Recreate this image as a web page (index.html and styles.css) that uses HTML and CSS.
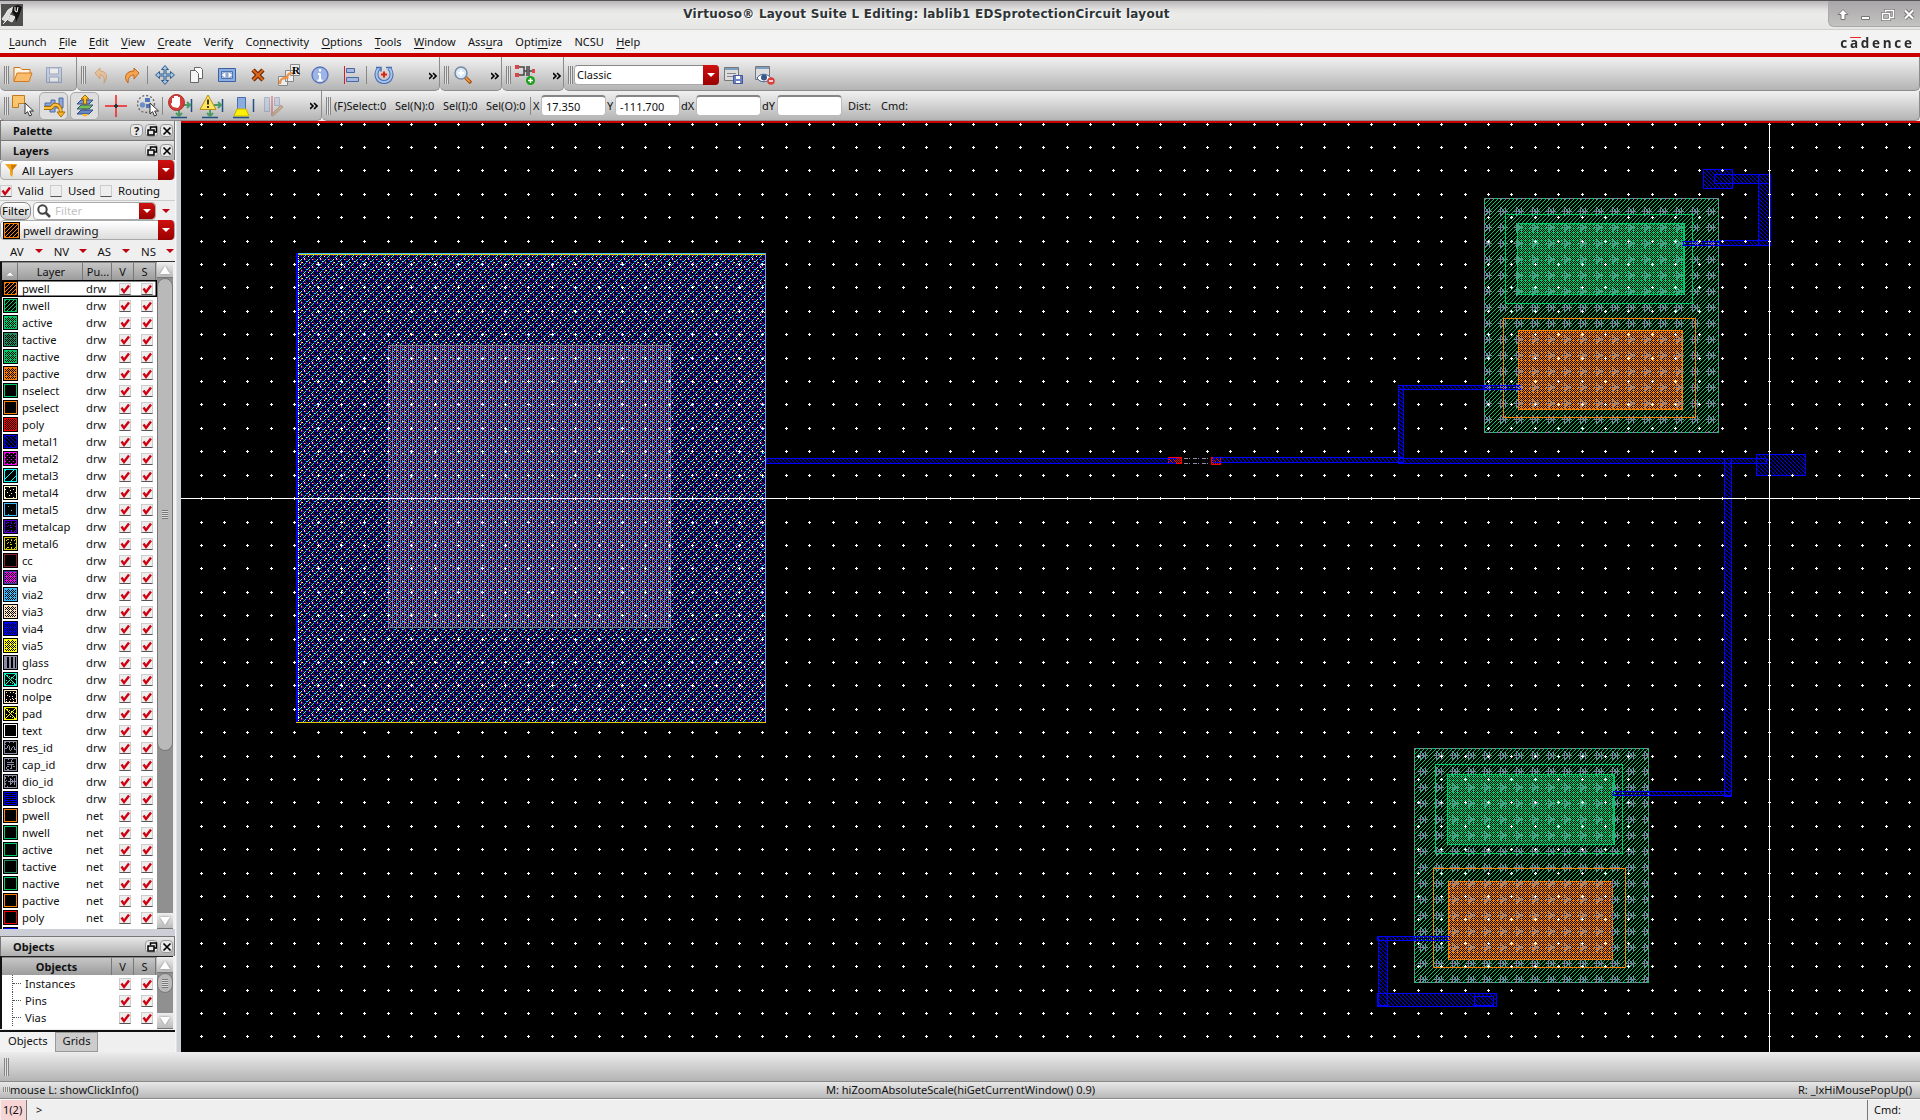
FILE: index.html
```html
<!DOCTYPE html>
<html lang="en">
<head>
<meta charset="utf-8">
<title>Virtuoso Layout Suite L Editing</title>
<link rel="stylesheet" href="styles.css">
</head>
<body>
<svg width="0" height="0" class="defs">
  <symbol id="tick" viewBox="0 0 12 12"><path d="M2.5 5.5 5 9 10 2.5" fill="none" stroke="#cf0010" stroke-width="2.4"/></symbol>
  <symbol id="more" viewBox="0 0 8 8"><path d="M0 1l3 3-3 3M4 1l3 3-3 3" fill="none" stroke="#000" stroke-width="1.6"/></symbol>
  <symbol id="float" viewBox="0 0 10 10"><path d="M3.5 3V1h6v5H7.500M1 4h6v5H1z" fill="none" stroke="#000" stroke-width="1.5"/></symbol>
  <symbol id="close" viewBox="0 0 10 10"><path d="M1.500 1.500l7 7m0-7l-7 7" fill="none" stroke="#000" stroke-width="1.7"/></symbol>
  <symbol id="pointer" viewBox="0 0 10 15"><path d="M1 1v11l2.600-2.300L5.500 14l2.200-1-2-4H9.500z" fill="#fff" stroke="#333"/></symbol>
</svg>
<div class="window">
  <header class="titlebar">
    <svg class="app-icon" width="22" height="22" viewBox="0 0 22 22"><rect width="22" height="22" fill="#50514f"/><path d="M2 20l5-5 2-6 5-4-2-2-5 3-3 5-3 4 3 2M7 16l4 2 3-5-5-2" fill="#ddd" stroke="#eee"/><path d="M12 3l5-2 4 2-3 9-3 6-1-6-3-4z" fill="#111"/><path d="M14 3v4l2 1 1-5" fill="none" stroke="#fff"/></svg>
    <h1>Virtuoso® Layout Suite L Editing: lablib1 EDSprotectionCircuit layout</h1>
    <div class="wm">
      <svg width="92" height="26" viewBox="0 0 92 26"><g fill="#fff" stroke="#777"><path d="M14 9.500l5 5h-3v5h-4v-5h-3z"/><path d="M32.500 16.500h8v3h-8z"/></g><g fill="none"><path d="M56.500 12V10.500h8v7H61M53.500 13.500h7v6h-7z" stroke="#777" stroke-width="3"/><path d="M56.500 12V10.500h8v7H61M53.500 13.500h7v6h-7z" stroke="#fff" stroke-width="1.500"/><path d="M76 10.500l8 8m0-8l-8 8" stroke="#777" stroke-width="4"/><path d="M76 10.500l8 8m0-8l-8 8" stroke="#fff" stroke-width="2"/></g></svg>
    </div>
  </header>
  <nav class="menubar">
    <span><u>L</u>aunch</span><span><u>F</u>ile</span><span><u>E</u>dit</span><span><u>V</u>iew</span><span><u>C</u>reate</span><span>Verif<u>y</u></span><span>Co<u>n</u>nectivity</span><span><u>O</u>ptions</span><span><u>T</u>ools</span><span><u>W</u>indow</span><span>Ass<u>u</u>ra</span><span>Opti<u>m</u>ize</span><span>NCSU</span><span><u>H</u>elp</span>
    <b class="brand">c<i>a</i>dence</b>
  </nav>

  <div class="toolrow row1">
    <section class="tb g-file"><i class="grip"></i>
      <button><svg width="22" height="22" viewBox="0 0 22 22"><path d="M2 17V3.500h6l2 2h8V9" fill="#fff3df" stroke="#c9761c"/><path d="M2 17.500L5 9h15l-3 8.500z" fill="#f8bc6c" stroke="#d07a20"/></svg></button>
      <button class="dim"><svg width="20" height="20" viewBox="0 0 20 20"><path d="M2.500 2.500h15v15h-15z" fill="#b5c3de" stroke="#5570a5"/><path d="M5.500 3h9v6h-9zM5.500 12h9v5h-9z" fill="#fff" stroke="#6a83b0"/></svg></button>
    </section>
    <section class="tb g-edit"><i class="grip"></i>
      <button class="dim"><svg width="20" height="20" viewBox="0 0 20 20"><path d="M4 8l5-5v3c6 0 9 5 4 12 1-6-1-8-4-8v4z" fill="#f3ad62" stroke="#d07420"/></svg></button>
      <button><svg width="20" height="20" viewBox="0 0 20 20"><path d="M17 8l-5-5v3C4 6 1 12 6 18c0-5 2-8 6-8v4z" fill="#f3a451" stroke="#c76514"/></svg></button>
      <i class="sep"></i>
      <button><svg width="22" height="22" viewBox="0 0 22 22"><path d="M11 1.500l3.500 4h-2.500v4.500h4.500V7.500l4 3.500-4 3.500V12H12v4.500h2.500l-3.500 4-3.500-4H10V12H5.500v2.500L1.500 11l4-3.500V10H10V5.500H7.500z" fill="#a9c2de" stroke="#2e5e8e"/></svg></button>
      <button><svg width="20" height="20" viewBox="0 0 20 20"><path d="M8.500 2.500h6l2 2v9h-8z" fill="#fff" stroke="#666"/><path d="M4.500 5.500h5l3 3v9h-8z" fill="#f4f4f4" stroke="#666"/></svg></button>
      <button><svg width="20" height="20" viewBox="0 0 20 20"><path d="M1.500 3.500h17v13h-17z" fill="#8caedd" stroke="#3b62a6"/><path d="M4.500 6.500h11v7h-11z" fill="#bdd3ef" stroke="#4872b5"/><path d="M9 6v8l-5-4zM11 6v8l5-4z" fill="#fff" stroke="#3f66a6" stroke-width=".7"/></svg></button>
      <button><svg width="20" height="20" viewBox="0 0 20 20"><path d="M5 5l10 10M15 5L5 15" stroke="#6f2500" stroke-width="4.500"/><path d="M5 5l10 10M15 5L5 15" stroke="#dd6a1c" stroke-width="2"/></svg></button>
      <button><svg width="26" height="26" viewBox="0 0 26 26"><path d="M14.500 2.500h9v11h-9zM9.500 8.500h8v11h-8zM2.500 14.500h9v9h-9z" fill="#eee" stroke="#888"/><path d="M4 22c0-5 2-6 6-6M11 17c0-5 2-6 6-6" fill="none" stroke="#ef9447" stroke-width="2.500"/><text x="16" y="12" class="r-glyph">R</text></svg></button>
      <button><svg width="20" height="20" viewBox="0 0 20 20"><circle cx="10" cy="10" r="8" fill="#9db4e6" stroke="#5873b8" stroke-width="1.300"/><path d="M10 4v2.500M10 8.500v7M8 9h2M7.500 15.500h5" stroke="#fff" stroke-width="2"/></svg></button>
      <button><svg width="20" height="20" viewBox="0 0 20 20"><path d="M3.500 1v18" stroke="#d02020"/><path d="M5.500 3.500h8v4h-8zM5.500 12.500h12v4h-12z" fill="#a5b9e0" stroke="#4867a5"/></svg></button>
      <i class="sep"></i>
      <button><svg width="22" height="22" viewBox="0 0 22 22"><path d="M6 4C1 10 4 18 11 18s10-8 5-14" fill="none" stroke="#456fb3" stroke-width="4"/><path d="M6 4C1 10 4 18 11 18s10-8 5-14" fill="none" stroke="#abc4ec" stroke-width="2"/><path d="M3 3.500h5v4M13 3.500h6" fill="none" stroke="#456fb3" stroke-width="1.500"/><path d="M11 7.500v6M8 10.500h6" stroke="#e02010" stroke-width="2"/></svg></button>
      <svg class="more" width="8" height="8"><use href="#more"/></svg>
    </section>
    <section class="tb g-zoom"><i class="grip"></i>
      <button><svg width="20" height="20" viewBox="0 0 20 20"><path d="M11 11l7 7" stroke="#a65013" stroke-width="3.500"/><path d="M11 11l6 6" stroke="#f4a040" stroke-width="1.500"/><circle cx="8" cy="8" r="6" fill="#d9e9fa" stroke="#7789a2" stroke-width="1.500"/><path d="M8 5v6M5 8h6" stroke="#fff" stroke-width="2"/></svg></button>
      <svg class="more" width="8" height="8"><use href="#more"/></svg>
    </section>
    <section class="tb g-conn"><i class="grip"></i>
      <button><svg width="22" height="22" viewBox="0 0 22 22"><path d="M4 3h6v8H4M10 7h3M13 2v10M15 2v10M15 7h6" fill="none" stroke="#444" stroke-width="1.500"/><path d="M1 1h4v4H1zM1 9h4v4H1zM18 5h3v4h-3z" fill="#d44"/><circle cx="16.500" cy="16.500" r="4.500" fill="#19a019"/><path d="M16.500 14v5M14 16.500h5" stroke="#fff" stroke-width="1.500"/></svg></button>
      <svg class="more" width="8" height="8"><use href="#more"/></svg>
    </section>
    <section class="tb g-ws"><i class="grip"></i>
      <div class="combo ws"><span>Classic</span><em></em></div>
      <button><svg width="22" height="22" viewBox="0 0 22 22"><path d="M2.500 3.500h14v13h-14z" fill="#ddd" stroke="#777"/><path d="M3 4h13v2H3z" fill="#7c9fc0"/><path d="M5 9.500h9M5 12.500h7" stroke="#888"/><path d="M11.500 11.500h9v8h-9z" fill="#6d82c2" stroke="#42569a"/><path d="M14 12h4v3h-4zM14 17h4v2h-4z" fill="#fff"/></svg></button>
      <button><svg width="22" height="22" viewBox="0 0 22 22"><path d="M2.500 2.500h14v13h-14z" fill="#ddd" stroke="#777"/><path d="M3 3h13v2H3z" fill="#7c9fc0"/><path d="M4 14c3-5 10-5 14 0-4 5-11 5-14 0z" fill="#fff" stroke="#38598c"/><circle cx="11" cy="13.500" r="3" fill="#38598c"/><circle cx="18" cy="17" r="3.800" fill="#d9433c"/><path d="M16 17h4" stroke="#fff" stroke-width="1.500"/></svg></button>
    </section>
  </div>

  <div class="toolrow row2">
    <section class="tb g-sel"><i class="grip"></i>
      <button><svg width="24" height="24" viewBox="0 0 24 24"><path d="M1.500 1.500h12v8h-6v4h-6z" fill="#fbc56f" stroke="#c27a1e"/><use href="#pointer" x="13" y="8" width="10" height="15"/></svg></button>
      <button class="on"><svg width="24" height="24" viewBox="0 0 24 24"><path d="M3 9h6V6h4v6h4V4h4v10h-8v4H8v-6H3z" fill="#90a9d8" stroke="#4d6aa8"/><path d="M2 14h7l3-3c4-1 7 2 7 8" fill="none" stroke="#a86b00" stroke-width="4"/><path d="M2 14h7l3-3c4-1 7 2 7 8" fill="none" stroke="#ffc340" stroke-width="2"/><path d="M15 18h8l-4 5z" fill="#ffb629" stroke="#a86b00"/></svg></button>
      <button class="on"><svg width="24" height="24" viewBox="0 0 24 24"><path d="M12 22V3" stroke="#e49b00" stroke-width="4"/><g stroke="#334f7c"><path d="M4 20l4-4h12l-4 4z" fill="#6686c8"/><path d="M4 15l4-4h12l-4 4z" fill="#70bf50"/><path d="M4 10l4-4h12l-4 4z" fill="#7595d8"/></g><path d="M12 1l4 4h-2.500v5h-3V5H8z" fill="#ffbd28" stroke="#9b6900"/><path d="M9 20h6l-3 3z" fill="#ffbd28"/></svg></button>
      <button><svg width="24" height="24" viewBox="0 0 24 24"><path d="M12 1v22M1 12h22" stroke="#f22020" stroke-width="1.500"/><path d="M12 10v4M10 12h4" stroke="#333" stroke-width="2"/></svg></button>
      <button><svg width="24" height="24" viewBox="0 0 24 24"><circle cx="11" cy="10" r="8.500" fill="none" stroke="#666" stroke-width="1.300" stroke-dasharray="2 2"/><circle cx="7.500" cy="11" r="2.700" fill="#6c8fca"/><path d="M10 4h5v4h-5zM11 10h4v4h-4z" fill="#4f76b8"/><use href="#pointer" x="14" y="8" width="10" height="15"/></svg></button>
      <i class="sep"></i>
      <button><svg width="26" height="26" viewBox="0 0 26 26"><path d="M4 24.500h16M24.500 6v13" stroke="#234f86" stroke-width="1.500"/><path d="M16 12h7m-3-3l3 3-3 3M12 17v6m-3-3l3 3 3-3" fill="none" stroke="#4c9a65" stroke-width="2"/><circle cx="9.500" cy="9.500" r="8" fill="#d83b3b" stroke="#a32"/><path d="M6 14c-3-3-2-4-1-4V5h2v3-5h2v5-5h2v5-4h2v8l-2 3z" fill="#fff"/></svg></button>
      <button><svg width="26" height="26" viewBox="0 0 26 26"><path d="M4 24.500h16M24.500 6v13" stroke="#234f86" stroke-width="1.500"/><path d="M16 12h7m-3-3l3 3-3 3M12 17v6m-3-3l3 3 3-3" fill="none" stroke="#4c9a65" stroke-width="2"/><path d="M10 2l8 14.500H2z" fill="#ffe45e" stroke="#b98d10"/><path d="M10 6.500v5M10 13v2" stroke="#222" stroke-width="1.800"/></svg></button>
      <button><svg width="26" height="26" viewBox="0 0 26 26"><path d="M4 24.500h16M24.500 6v13" stroke="#234f86" stroke-width="1.500"/><path d="M8.500 4.500h8v12h-8z" fill="#8bacde" stroke="#4a6eab"/><path d="M8 16h9l3 7H5z" fill="#fff200" stroke="#c8b400"/></svg></button>
      <button class="dim"><svg width="24" height="24" viewBox="0 0 24 24"><path d="M3.500 3.500h5v14h-5zM13.500 3.500h5v8h-5z" fill="#b3bddb" stroke="#7b88b0"/><path d="M11 2v18" stroke="#c33" stroke-width="1.500"/><path d="M10 21l10-10 2 2-10 9z" fill="#c98b44" stroke="#865"/></svg></button>
      <svg class="more" width="8" height="8"><use href="#more"/></svg>
    </section>
    <section class="tb g-status"><i class="grip"></i>
      <span class="s1">(F)Select:0</span><span class="s2">Sel(N):0</span><span class="s3">Sel(I):0</span><span class="s4">Sel(O):0</span><i class="sep"></i>
      <label>X</label><div class="field">17.350</div><label>Y</label><div class="field">-111.700</div><label class="d">dX</label><div class="field"></div><label class="d">dY</label><div class="field"></div>
      <span class="dist">Dist:</span><span>Cmd:</span>
    </section>
  </div>

  <main class="work">
    <aside class="side">
      <div class="dock"><b>Palette</b><i class="btn">?</i><i class="btn"><svg width="10" height="10"><use href="#float"/></svg></i><i class="btn"><svg width="10" height="10"><use href="#close"/></svg></i></div>
      <div class="dock"><b>Layers</b><i class="btn"><svg width="10" height="10"><use href="#float"/></svg></i><i class="btn"><svg width="10" height="10"><use href="#close"/></svg></i></div>
      <div class="combo flat"><svg width="12" height="13" viewBox="0 0 12 13"><path d="M0 0h12L7.500 6v7L5 11V6z" fill="#f5a31c"/><path d="M6 1h6L7.500 6v6z" fill="#c97a08"/></svg><span>All Layers</span><em></em></div>
      <div class="checks"><i class="cb"><svg width="12" height="12"><use href="#tick"/></svg></i><span class="c1">Valid</span><i class="cb"></i><span class="c2">Used</span><i class="cb"></i><span>Routing</span></div>
      <div class="filter"><button class="fbtn">Filter</button><div class="combo find"><svg width="14" height="14" viewBox="0 0 14 14"><circle cx="5.500" cy="5.500" r="4.200" fill="none" stroke="#444" stroke-width="2"/><path d="M8.500 8.500l4.500 4.500" stroke="#444" stroke-width="2.500"/></svg><span>Filter</span><em></em></div><i class="tri"></i></div>
      <div class="combo flat cur"><svg id="curSwatch" width="17" height="17"></svg><span>pwell drawing</span><em></em></div>
      <div class="quick"><span>AV</span><i class="tri"></i><span>NV</span><i class="tri"></i><span>AS</span><i class="tri"></i><span>NS</span><i class="tri"></i></div>
      <div class="table layers">
        <div class="body">
          <div class="head"><span class="h0"><svg width="8" height="5" viewBox="0 0 8 5"><path d="M0 5l4-4 4 4z" fill="#fff" stroke="#888" stroke-width=".5"/></svg></span><span class="h1">Layer</span><span class="h2">Pu...</span><span class="h3">V</span><span class="h4">S</span></div>
          <div id="rows"></div>
        </div>
        <div class="scroll"><i class="arr up"></i><div class="track"><div class="thumb"><i></i></div></div><i class="arr dn"></i></div>
      </div>
      <div class="hsplit"></div>
      <div class="dock obj"><b>Objects</b><i class="btn"><svg width="10" height="10"><use href="#float"/></svg></i><i class="btn"><svg width="10" height="10"><use href="#close"/></svg></i></div>
      <div class="table objects">
        <div class="body">
          <div class="head"><b class="ho">Objects</b><span class="h3">V</span><span class="h4">S</span></div>
          <div id="objs"></div>
        </div>
        <div class="scroll"><i class="arr up"></i><div class="track"><div class="thumb small"><i></i></div></div><i class="arr dn"></i></div>
      </div>
      <div class="tabs"><span class="active">Objects</span><span>Grids</span></div>
    </aside>
    <div class="vsplit"></div>
    <canvas id="layout" width="1739" height="929"></canvas>
  </main>

  <div class="bottombar"><i class="grip"></i></div>
  <div class="mouse"><span><i class="grip mini"></i>mouse L: showClickInfo()</span><span>M: hiZoomAbsoluteScale(hiGetCurrentWindow() 0.9)</span><span>R: _lxHiMousePopUp()</span></div>
  <footer class="cmd"><span class="num">1(2)</span><span class="prompt">&gt;</span><span class="lab">Cmd:</span></footer>
</div>
<script src="app.js"></script>
</body>
</html>
```
FILE: styles.css
```css
* { box-sizing: border-box; }
body { margin: 0; background: #efefef; color: #111; font: 11px/15px "Noto Sans", sans-serif; overflow: hidden; }
.defs { position: absolute; }
i, em { font-style: normal; }
.window { width: 1920px; height: 1120px; display: flex; flex-direction: column; }
.titlebar { height: 30px; flex: none; display: flex; align-items: flex-start; border-top: 1px solid #555; border-bottom: 1px solid #cfd1cf; background: linear-gradient(#b9b5b9, #e4e4e2 9px, #ebebe9 14px, #e6e6e4); }
.app-icon { margin: 3px 0 0 1px; flex: none; }
.titlebar h1 { flex: 1; margin: 5px 0 0 2px; text-align: center; font: bold 12px/17px "DejaVu Sans", sans-serif; color: #2e3436; text-shadow: 1px 1px #fff; letter-spacing: .25px; }
.wm { width: 92px; height: 26px; background: linear-gradient(#a9a6a9, #c3c3c1); border: solid #aaa; border-width: 0 0 1px 1px; border-bottom-left-radius: 6px; }
.wm svg { margin-top: -1px; display: block; }
.menubar { height: 23px; flex: none; display: flex; gap: 12.400px; padding: 4px 5px 0 9px; background: #f3f3f3; }
.menubar u { text-underline-offset: 2px; }
.brand { margin-left: auto; font: bold 15px/17px "Open Sans", sans-serif; letter-spacing: 3px; transform: scaleX(.9); transform-origin: right; color: #2b2b2b; }
.brand i { border-top: 1px solid #e22; display: inline-block; line-height: 8px; height: 10px; }
.toolrow { display: flex; flex: none; }
.row1 { height: 38px; border-top: 4px solid #c80000; background: #f3f3f3; }
.row2 { height: 30px; }
.tb { display: flex; align-items: center; height: 100%; background: linear-gradient(#f1f1f1, #dcdcdc 35%, #b4b4b4); border: solid #8c8c8c; border-width: 0 1px 1px 0; border-radius: 0 0 5px 5px; padding-left: 4px; position: relative; }
.row1 .tb { padding-top: 2px; }
.tb button { width: 31px; height: 28px; padding: 0; border: 0; background: none; display: flex; align-items: center; justify-content: center; flex: none; }
.tb button.on { width: 29px; margin: 0 1px; background: #dedede; border: 1px solid #aaa; border-radius: 5px; }
.dim { opacity: .5; }
.more { position: absolute; right: 2px; top: 15px; }
.row2 .more { top: 11px; right: 3px; }
.grip { width: 5px; height: 18px; flex: none; background: repeating-linear-gradient(90deg, #858585 0 1px, #e2e2e2 1px 2px); }
.sep { width: 2px; height: 18px; flex: none; border-left: 1px solid #888; }
.r-glyph { font: bold 11px "Liberation Serif", serif; }
.g-file { width: 77px; } .g-edit { width: 363px; } .g-zoom { width: 62px; } .g-conn { width: 62px; } .g-ws { flex: 1; }
.g-file .grip, .g-sel .grip { margin-right: -2px; }
.g-edit .grip { margin-right: -1px; }
.g-zoom button, .g-conn button { width: 28px; }
.combo { display: flex; align-items: center; position: relative; background: #fff; }
.combo em { margin-left: auto; width: 16px; align-self: stretch; background: linear-gradient(#d01010, #990000); border-radius: 0 4px 4px 0; display: flex; align-items: center; justify-content: center; }
.combo em::after { content: ""; border: 4px solid transparent; border-top-color: #fff; border-bottom: 0; }
.ws { width: 145px; height: 20px; margin: 0 -2px 0 1px; border: 1px solid #aaa; border-top-color: #888; border-radius: 4px; padding-left: 2px; }
.ws em { margin: -1px -1px -1px auto; }
.g-sel { width: 322px; }
.g-status { flex: 1; }
.g-status span { white-space: nowrap; }
.g-status .grip { margin-right: 3px; }
.g-status .s1 { width: 61px; } .g-status .s2 { width: 48px; } .g-status .s3 { width: 43px; } .g-status .s4 { width: 44px; }
.g-status label { width: 9px; padding-left: 1px; } .g-status label.d { width: 16px; }
.field { width: 65px; height: 21px; padding: 2px 4px; background: #fff; border: 1px solid #bbb; border-top: 2px solid #858585; border-radius: 4px; }
.g-status .dist { margin: 0 10px 0 6px; }
.work { display: flex; height: 931px; flex: none; }
.side { width: 175px; margin-top: -1px; display: flex; flex-direction: column; background: #efefef; overflow: hidden; }
.dock { height: 20px; flex: none; display: flex; align-items: center; gap: 2px; padding: 0 1px 0 12px; background: linear-gradient(#e8e8e8, #aeaeae); border: 1px solid #777; border-width: 1px 1px 0 1px; }
.dock b { margin-right: auto; }
.btn { width: 13px; height: 13px; border: 1px solid #999; background: #e9e9e9; border-radius: 4px; display: flex; align-items: center; justify-content: center; font-weight: bold; font-size: 11px; }
.flat { height: 20px; flex: none; background: linear-gradient(#fff, #ddd); border: 1px solid #aaa; border-radius: 4px; padding-left: 4px; gap: 5px; margin-bottom: 1px; }
.flat em { margin-top: -1px; margin-bottom: -1px; margin-right: 0; }
.flat span { font-size: 11.500px; }
.checks { height: 20px; flex: none; display: flex; align-items: center; font-size: 11.400px; border-bottom: 1px solid #ccc; }
.cb { width: 12px; height: 12px; flex: none; display: block; background: #eee; border: 1px solid #ccc; border-bottom-color: #555; }
.cb svg { display: block; margin: -1px; }
.checks .cb + span { margin-left: 6px; } .checks .c1 { width: 32px; } .checks .c2 { width: 32px; }
.filter { height: 19px; flex: none; display: flex; align-items: center; }
.fbtn { width: 31px; height: 18px; padding: 0; font: 11.400px "Noto Sans", sans-serif; border: 1px solid #888; border-radius: 7px; background: linear-gradient(#fff, #ccc); }
.find { width: 123px; height: 18px; margin-left: 2px; border: 1px solid #aaa; border-radius: 4px; padding-left: 3px; gap: 4px; }
.find span { color: #c3c3c3; font-size: 11.500px; }
.tri { width: 0; height: 0; flex: none; border: 4px solid transparent; border-top-color: #bf0010; border-bottom: 0; display: block; }
.filter .tri { margin-left: 6px; }
.cur { padding-left: 2px; gap: 3px; }
.quick { height: 21px; flex: none; display: flex; align-items: center; padding-left: 10px; font-size: 11.400px; border-bottom: 1px solid #333; }
.quick span { width: 25px; flex: none; } .quick .tri { margin-right: 10.700px; }
.table { display: flex; background: #fff; border-left: 2px solid #111; width: 173px; overflow: hidden; flex: none; }
.layers { height: 667px; }
.body { width: 155px; flex: none; overflow: hidden; }
.head { height: 18px; display: flex; background: linear-gradient(#c6c6c6, #9c9c9c); border-top: 1px solid #888; text-align: center; line-height: 17px; }
.head > * { border-right: 1px solid #777; }
.h0 { width: 16px; } .h1 { width: 65px; padding-left: 2px; } .h2 { width: 29px; padding-left: 2px; } .h3 { width: 22px; } .h4 { width: 22px; }
.ho { width: 110px; }
.lrow { height: 17px; display: flex; align-items: center; padding-left: 1px; font-size: 11.200px; }
.lrow .nm { width: 68px; padding-left: 4px; flex: none; } .lrow .pu { width: 33px; flex: none; }
.lrow .cb + .cb { margin-left: 10px; }
.lrow.sel { box-shadow: inset 0 0 0 1.500px #000; }
.lrow svg.sw { flex: none; }
.scroll { width: 16px; display: flex; flex-direction: column; background: #909090; }
.arr { height: 16px; flex: none; background: linear-gradient(#eee, #bbb); border-bottom: 1px solid #777; display: flex; align-items: center; justify-content: center; }
.arr::after { content: ""; border: 5px solid transparent; border-bottom: 8px solid #fff; border-top: 0; filter: drop-shadow(0 0 1px #888); }
.arr.dn::after { border-top: 8px solid #fff; border-bottom: 0; }
.track { flex: 1; }
.thumb { height: 473px; background: #b9b9b9; border: 1px solid #777; border-radius: 8px; display: flex; align-items: center; justify-content: center; }
.thumb i { width: 6px; height: 9px; background: repeating-linear-gradient(#777 0 1px, #ddd 1px 2px); }
.thumb.small { height: 20px; }
.hsplit { height: 7px; flex: none; background: #ccd0d6; }
.objects { height: 73px; border-top: 1px solid #222; }
.orow { height: 17px; display: flex; align-items: center; padding-left: 10px; font-size: 11.200px; }
.orow .br { width: 9px; height: 17px; border-left: 1px dotted #555; flex: none; }
.orow .br::after { content: ""; display: block; border-top: 1px dotted #555; margin-top: 8px; }
.orow .nm { width: 98px; padding-left: 4px; flex: none; }
.orow .cb + .cb { margin-left: 10px; }
.tabs { flex: 1; display: flex; align-items: flex-start; border-top: 2px solid #111; margin-top: 1px; }
.tabs span { height: 20px; padding: 0 7px; background: #ccc; border: 1px solid #999; border-left: 0; font-size: 11.200px; }
.tabs .active { background: #f2f2f2; height: 21px; padding: 1px 7px 0 8px; border-top: 0; }
.vsplit { width: 6px; background: linear-gradient(90deg, #fff, #ccd0d5 40%); }
#layout { width: 1739px; height: 931px; display: block; border-top: 2px solid #cc0000; background: #000; }
.bottombar { height: 30px; flex: none; background: linear-gradient(#ececec, #b4b4b4); border-bottom: 1px solid #888; padding: 6px 4px; }
.bottombar .grip { display: block; }
.mouse { height: 17px; flex: none; display: grid; grid-template-columns: calc(33.3% + 4px) 33.3% 1fr; padding: 0 8px 0 3px; background: linear-gradient(#e8e8e8, #b8b8b8); border-bottom: 1px solid #888; font-size: 11.050px; }
.mouse span:nth-child(2) { text-align: center; } .mouse span:nth-child(3) { text-align: right; }
.mini { display: inline-block; height: 5px; width: 7px; margin-bottom: 2px; }
.cmd { flex: 1; display: flex; align-items: stretch; line-height: 20px; border-top: 1px solid #fff; border-bottom: 1px solid #666; background: #efefef; }
.num { width: 26px; margin-left: 1px; padding-left: 2px; background: #f7d5d5; border-right: 1px solid #777; }
.prompt { margin-left: 9px; flex: 1; } .lab { width: 53px; padding-left: 6px; border-left: 1px solid #777; }
```
FILE: app.js
```js
// Fill patterns: each answers whether pixel (x, y) is lit.
const mod = (a, n) => ((a % n) + n) % n;
const bits = rows => (x, y) => { const r = rows[mod(y, rows.length)]; return r[mod(x, r.length)] === '#'; };
const P = {
  none: () => false,
  slash: (x, y) => mod(x + y, 4) === 0,
  back: (x, y) => mod(x - y, 4) === 0,
  cross: (x, y) => mod(x + y, 2) === 0 || (mod(x, 4) === 1 && mod(y, 4) === 0),
  check: (x, y) => mod(x + y, 2) === 0,
  dots: (x, y) => (mod(x, 4) === 0 && mod(y, 4) === 0) || (mod(x, 4) === 2 && mod(y, 4) === 2),
  slash8: (x, y) => mod(x + y, 8) === 0,
  sparse: bits(['....#...', '........', '#.......', '.....#..', '........', '..#.....', '......#.', '........']),
  few: bits(['........', '........', '...#....', '........', '........', '........', '......#.', '........']),
  marks: bits(['........', '..##..#.', '.#....#.', '........', '...#.#..', '..#.....', '.....##.', '........']),
  bars: (x) => mod(x, 4) === 0 || mod(x, 4) === 1,
  ex: (x, y) => x === y || x + y === 10 || mod(x * 3 + y * 5, 11) === 0,
  noise: (x, y) => mod(x * 5 + y * 3, 7) < 2 && mod(x * y, 3) !== 0,
  res: bits(['#...#...#..', '...........', '#..........', '...#.......', '..#.#...#..', '..#.#..#.#.', '##..#.#..#.', '....#.#..##', '.....#.....', '...........', '...........']),
  cap: bits(['...#...#...', '......#....', '......#....', '..#######..', '...........', '..#######..', '......#....', '..##..#.##.', '.#....#....', '.#...##....', '..##.......']),
  dio: bits(['...#...#...', '#..........', '#....#...#.', '.....##..#.', '.#...#.#.#.', '#..########', '.....#.#.#.', '#....##..#.', '#....#...#.', '...........', '..#........']),
  brick: bits(['...........', '.#####.####', '...........', '####.######', '...........', '.#####.####', '...........', '####.######', '...........', '.#####.####', '...........'])
};

const layers = [
  ['pwell', '#ff8000', 'slash'], ['nwell', '#00cc66', 'slash'], ['active', '#00cc66', 'cross'], ['tactive', '#238b60', 'cross'],
  ['nactive', '#00cc66', 'cross'], ['pactive', '#ff8000', 'cross'], ['nselect', '#00cc66', 'none'], ['pselect', '#ff8000', 'none'],
  ['poly', '#ff0000', 'check'], ['metal1', '#0000ff', 'back'], ['metal2', '#ff00ff', 'dots'], ['metal3', '#00ffff', 'slash8'],
  ['metal4', '#ffffcc', 'sparse'], ['metal5', '#39bfff', 'few'], ['metalcap', '#5e00e6', 'marks'], ['metal6', '#d9cc00', 'marks'],
  ['cc', '#8c2626', 'none'], ['via', '#ff00ff', 'cross', '#39399f'], ['via2', '#39bfff', 'cross'], ['via3', '#ffe6bf', 'cross'],
  ['via4', '#0000ff', 'cross'], ['via5', '#ffff00', 'cross'], ['glass', '#8c8ca6', 'bars'], ['nodrc', '#00ffcc', 'ex'],
  ['nolpe', '#ffe6bf', 'noise'], ['pad', '#ffff00', 'ex'], ['text', '#ffffff', 'none'], ['res_id', '#8c8ca6', 'res'],
  ['cap_id', '#8c8ca6', 'cap'], ['dio_id', '#8c8ca6', 'dio'], ['sblock', '#0000ff', 'brick'],
  ['pwell', '#ff8000', 'none', , 'net'], ['nwell', '#00cc66', 'none', , 'net'], ['active', '#00cc66', 'none', , 'net'],
  ['tactive', '#238b60', 'none', , 'net'], ['nactive', '#00cc66', 'none', , 'net'], ['pactive', '#ff8000', 'none', , 'net'],
  ['poly', '#ff0000', 'none', , 'net'], ['metal1', '#0000ff', 'none', , 'net']
];

function swatch(color, pat, edge, n) {
  let d = '';
  for (let y = 2; y < n - 2; y++) for (let x = 2; x < n - 2; x++) if (P[pat](x - 2, y - 2)) d += `M${x} ${y}h1v1h-1z`;
  return `<rect width="${n}" height="${n}"/><rect x="1.5" y="1.5" width="${n - 3}" height="${n - 3}" fill="none" stroke="${edge || color}"/><path d="${d}" fill="${color}"/>`;
}
const cb = '<i class="cb"><svg width="12" height="12"><use href="#tick"/></svg></i>';
document.getElementById('rows').innerHTML = layers.map(([n, c, p, e, u], i) =>
  `<div class="lrow${i ? '' : ' sel'}"><svg class="sw" width="15" height="15" shape-rendering="crispEdges">${swatch(c, p, e, 15)}</svg><span class="nm">${n}</span><span class="pu">${u || 'drw'}</span>${cb}${cb}</div>`).join('');
document.getElementById('curSwatch').innerHTML = swatch('#ff8000', 'slash', null, 17);
document.getElementById('objs').innerHTML = ['Instances', 'Pins', 'Vias'].map(n =>
  `<div class="orow"><i class="br"></i><span class="nm">${n}</span>${cb}${cb}</div>`).join('');

// Layout view, drawn pixel by pixel in window coordinates.
const OX = 181, OY = 123, W = 1739, H = 929;
const ctx = document.getElementById('layout').getContext('2d');
const img = ctx.createImageData(W, H);
const px = new Uint32Array(img.data.buffer).fill(0xff000000);
const col = h => (0xff000000 | parseInt(h.slice(5, 7) + h.slice(3, 5) + h.slice(1, 3), 16)) >>> 0;
const set = (x, y, c) => { x -= OX; y -= OY; if (x >= 0 && y >= 0 && x < W && y < H) px[y * W + x] = c; };
function fill(x0, y0, x1, y1, color, f) {
  const c = col(color);
  for (let y = y0; y < y1; y++) for (let x = x0; x < x1; x++) if (f(x, y)) set(x, y, c);
}
function box(x0, y0, x1, y1, color, f) {
  fill(x0, y0, x1, y1, color, (x, y) => x === x0 || y === y0 || x === x1 - 1 || y === y1 - 1 || (f ? f(x, y) : false));
}
const all = () => true;
const GREY = '#8080a0', GREEN = '#00cc66', ORANGE = '#ff8000', BLUE = '#0000ff';
const diode = bits(['..#....#........', '..##...#........', '..#.#..#........', '..#..#.#........', '##########......', '..#..#.#........', '..#.#..#........', '..##...#........', '..#....#........', '................', '................', '................', '................', '................', '................', '................']);
const wire = (a, b, c, d) => box(a, b, c, d, BLUE, P.back);

// Bond pad: stacked metals plus the glass opening.
const pad = (color, f) => fill(296, 253, 766, 723, color, f);
pad(BLUE, (x, y) => mod(x - y, 4) === 0);
pad('#5e00e6', (x, y) => mod(x * 3 + y * 5, 8) === 0);
pad('#ff00ff', (x, y) => mod(x, 4) === 1 && mod(y, 4) === 3);
pad('#00ffff', P.slash8);
pad('#39bfff', (x, y) => mod(x, 8) === 2 && mod(y, 8) === 5);
pad(BLUE, (x, y) => mod(x - y, 8) === 4);
pad('#ffffcc', (x, y) => P.sparse(x, y) && mod(x + y, 16) < 8);
pad('#d9cc00', (x, y) => mod(x, 8) === 5 && mod(y, 8) === 6 || mod(x, 8) === 0 && mod(y, 8) === 3);
fill(388, 345, 671, 628, GREY, (x) => mod(x, 4) === 0);
fill(388, 345, 671, 628, '#a06e96', (x, y) => mod(x, 4) === 2 && mod(y, 2) === 0);
box(388, 345, 671, 628, GREY);
fill(296, 253, 766, 254, '#39bfff', all);
fill(296, 254, 766, 255, '#d9cc00', all);
fill(296, 253, 298, 723, BLUE, all);
fill(298, 255, 299, 722, '#ffffcc', (x, y) => mod(y, 2) === 0);
fill(765, 253, 766, 723, '#8c8cff', all);
fill(296, 722, 766, 723, '#d9cc00', all);

function device(x, y, act, pact) {
  const marks = (a, b) => diode(a - 1562, b - 207);
  box(x, y, x + 235, y + 235, GREEN, P.slash);
  fill(x, y, x + 235, y + 235, GREY, marks);
  box(x + 21, y + 16, x + 209, y + 106, GREEN);
  box(...act, GREEN, P.cross);
  fill(...act, GREY, (a, b) => marks(a, b) && mod(a + b, 4) === 0);
  fill(act[2] - 2, act[1], act[2], act[3], GREEN, all);
  box(...pact, ORANGE, P.cross);
  fill(...pact, GREY, (a, b) => marks(a, b) && mod(a + b, 4) !== 0);
  fill(x, y, x + 235, y + 235, GREY, (a, b) => (a === x || b === y || a === x + 234 || b === y + 234) && mod(a + b, 8) < 5);
  box(x + 19, y + 120, x + 212, y + 220, ORANGE);
}
device(1484, 198, [1517, 223, 1685, 295], [1518, 330, 1683, 410]);
device(1414, 748, [1447, 774, 1615, 845], [1448, 881, 1613, 960]);

wire(766, 458, 1182, 464); wire(1211, 457, 1404, 463); wire(1398, 458, 1767, 464);
wire(1398, 385, 1404, 464); wire(1398, 385, 1484, 390); wire(1756, 454, 1806, 476);
wire(1724, 458, 1732, 797); wire(1719, 240, 1771, 246); wire(1758, 174, 1771, 246);
wire(1703, 169, 1733, 189); wire(1714, 174, 1771, 184);
wire(1649, 791, 1732, 796); wire(1377, 936, 1414, 941); wire(1378, 936, 1388, 1006);
wire(1377, 993, 1497, 1007); wire(1474, 996, 1494, 1006);
for (const [a, b, c, d] of [[1484, 385, 1521, 390], [1683, 241, 1720, 246], [1613, 791, 1650, 796], [1414, 936, 1450, 941]])
  fill(a, b, c, d, BLUE, (x, y) => y === b || y === d - 1 || x === a || mod(x - y, 4) === 0);

// Series resistor
box(1168, 457, 1182, 464, '#ff0000', P.check);
fill(1168, 458, 1176, 464, BLUE, (x, y) => y === 458 || y === 463 || mod(x - y, 4) === 0);
box(1211, 457, 1221, 465, '#ff0000', P.check);
fill(1213, 457, 1221, 463, BLUE, (x, y) => y === 457 || y === 462 || x === 1213 || mod(x - y, 4) === 0);
fill(1182, 458, 1211, 464, '#8c8ca6', (x, y) => (y === 458 || y === 463) && mod(x - 1184, 9) < 6 && mod(x - 1184, 9) !== 4);

// Major grid and axes
for (let i = -68; i <= 7; i++) for (let j = -17; j <= 24; j++) {
  const x = Math.floor(1769.3 + i * 23.405), y = Math.floor(498.6 + j * 23.405);
  for (const [a, b] of [[0, 0], [1, 0], [-1, 0], [0, 1], [0, -1]]) set(x + a, y + b, 0xffffffff);
}
fill(1769, 123, 1770, 1052, '#ffffff', all);
fill(181, 498, 1920, 499, '#ffffff', all);
ctx.putImageData(img, 0, 0);
```
